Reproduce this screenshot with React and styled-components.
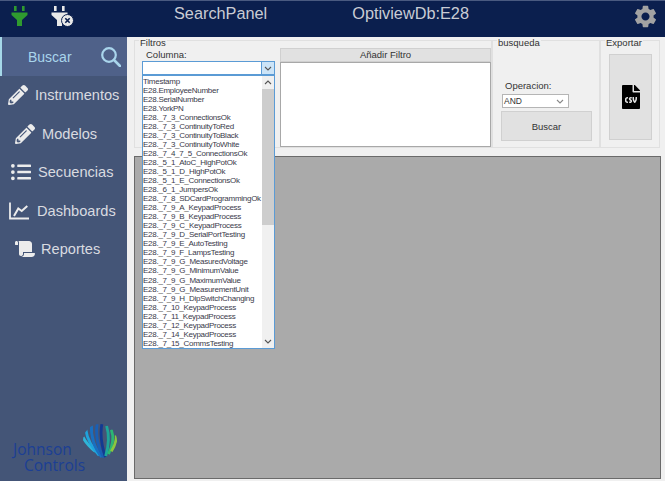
import React from 'react';
import styled, { createGlobalStyle } from 'styled-components';
import { FaPencilAlt, FaListUl, FaScroll, FaFileCsv } from 'react-icons/fa';
import { MdSettings } from 'react-icons/md';

const GlobalStyle = createGlobalStyle`
  html, body {
    margin: 0;
    padding: 0;
    background: #f0f0f0;
    font-family: "Liberation Sans", Arial, sans-serif;
    overflow: hidden;
  }
`;

const Page = styled.div`
  width: 665px;
  height: 481px;
  display: flex;
  flex-direction: column;
`;

const Header = styled.header`
  height: 37px;
  flex: none;
  box-sizing: border-box;
  border-top: 1px solid #4a5a80;
  background: #0b1f4e;
  display: flex;
  align-items: center;
  position: relative;
`;

const PlugSlot = styled.div`
  width: ${(p) => p.$width}px;
  margin-left: ${(p) => p.$left}px;
  display: flex;
  margin-top: -6px;
`;

const HeaderTitle = styled.div`
  color: #c9ccd4;
  font-size: 16.3px;
  margin-left: ${(p) => p.$left}px;
  margin-top: -12px;
  white-space: nowrap;
`;

const GearSlot = styled.div`
  margin-left: auto;
  margin-right: 6px;
  color: #a3a3a3;
  font-size: 27px;
  display: flex;
  margin-top: -6px;
`;

const Body = styled.div`
  flex: 1;
  display: flex;
  min-height: 0;
`;

const Sidebar = styled.nav`
  width: 127px;
  flex: none;
  background: #445577;
  display: flex;
  flex-direction: column;
`;

const ActiveItem = styled.div`
  height: 39px;
  box-sizing: border-box;
  border-left: 2px solid #a6d8e8;
  background: #4f6189;
  color: #a9d5ec;
  font-size: 14px;
  display: flex;
  align-items: center;
  justify-content: space-between;
  padding: 0 6px 0 26px;
`;

const NavItem = styled.div`
  height: 38.5px;
  display: flex;
  align-items: center;
  gap: ${(p) => p.$gap}px;
  padding-left: ${(p) => p.$indent}px;
  color: #d9dbe0;
  font-size: 14.6px;
  white-space: nowrap;

  svg {
    font-size: 20px;
    flex: none;
    color: #ececec;
  }
`;

const Nav = styled.div`
  display: flex;
  flex-direction: column;
`;

const Brand = styled.div`
  margin-top: auto;
  height: 60px;
  position: relative;
  padding: 20px 0 0 13px;
  box-sizing: border-box;
  color: #1c3f94;
  font-family: "Open Sans", "Liberation Sans", sans-serif;
  font-size: 15.5px;
  line-height: 16px;
`;

const BrandLine = styled.div`
  margin-left: ${(p) => p.$indent}px;
`;

const BrandMark = styled.svg`
  position: absolute;
  left: 83px;
  top: 3px;
`;

const Content = styled.main`
  flex: 1;
  display: flex;
  flex-direction: column;
  padding: 0 4px 2px 7px;
  min-width: 0;
`;

const Toolbar = styled.div`
  height: 119px;
  flex: none;
  display: flex;
  color: #333;
`;

const Group = styled.fieldset`
  margin: 0;
  padding: 5px 0 0;
  height: 111px;
  box-sizing: border-box;
  border: 1px solid #e0e0e0;
  width: ${(p) => p.$width}px;
  flex: none;
  position: relative;
  min-width: 0;
`;

const GroupLabel = styled.legend`
  font-size: 9.5px;
  line-height: 11px;
  height: 6px;
  padding: 0 1px;
  margin-left: ${(p) => p.$left}px;
`;

const FilterRow = styled.div`
  display: flex;
  padding: 1px 0 0 7px;
  gap: 5px;
`;

const ColumnField = styled.div`
  width: 133px;
  flex: none;
  position: relative;
`;

const FieldLabel = styled.div`
  font-size: 9.5px;
  line-height: 12px;
  margin-left: ${(p) => p.$left}px;
  height: ${(p) => p.$height}px;
`;

const ComboBox = styled.div`
  height: 14px;
  box-sizing: border-box;
  border: 1px solid #5b9bd5;
  background: #fff;
  display: flex;
  justify-content: flex-end;
`;

const ComboArrow = styled.div`
  width: 12px;
  background: #cce4f7;
  border-left: 1px solid #5b9bd5;
  display: flex;
  align-items: center;
  justify-content: center;
`;

const Dropdown = styled.div`
  position: absolute;
  left: 0;
  top: 26px;
  width: 133px;
  height: 274px;
  box-sizing: border-box;
  border: 1px solid #5b9bd5;
  background: #fff;
  display: flex;
  z-index: 2;
`;

const OptionList = styled.div`
  flex: 1;
  padding: 0.5px 0 0;
  min-width: 0;
  overflow: hidden;
`;

const Option = styled.div`
  height: 9.05px;
  font-size: 8px;
  letter-spacing: -0.27px;
  line-height: 9px;
  color: #3a3a4a;
  white-space: nowrap;
`;

const Scrollbar = styled.div`
  width: 12px;
  flex: none;
  background: #f0f0f0;
  position: relative;
  display: flex;
  flex-direction: column;
  justify-content: space-between;
`;

const ScrollThumb = styled.div`
  position: absolute;
  left: 0;
  right: 0;
  top: 13px;
  height: 136px;
  background: #cdcdcd;
`;

const ScrollArrow = styled.div`
  height: 13px;
  display: flex;
  align-items: center;
  justify-content: center;
`;

const FilterColumn = styled.div`
  flex: 1;
  display: flex;
  flex-direction: column;
  margin-top: -1px;
`;

const AddButton = styled.div`
  height: 14px;
  box-sizing: border-box;
  background: #e1e1e1;
  border: 1px solid #d0d0d0;
  font-size: 9.5px;
  line-height: 12px;
  text-align: center;
  color: #333;
`;

const FilterBox = styled.div`
  height: 85px;
  box-sizing: border-box;
  background: #fff;
  border: 1px solid #a8a8a8;
`;

const SearchBody = styled.div`
  padding: 32px 8px 0 9px;
  display: flex;
  flex-direction: column;
`;

const OperatorSelect = styled.div`
  width: 67px;
  height: 14px;
  box-sizing: border-box;
  background: #fff;
  border: 1px solid #b5b5b5;
  font-size: 8.5px;
  line-height: 12px;
  padding-left: 1px;
  display: flex;
  justify-content: space-between;
  align-items: center;
  padding-right: 4px;
`;

const GrayButton = styled.div`
  box-sizing: border-box;
  background: #e1e1e1;
  border: 1px solid #d0d0d0;
  display: flex;
  align-items: center;
  justify-content: center;
  font-size: 9.5px;
  color: #333;
  width: ${(p) => p.$width}px;
  height: ${(p) => p.$height}px;
  margin: ${(p) => p.$margin};
`;

const ResultPane = styled.section`
  flex: 1;
  box-sizing: border-box;
  background: #aaaaaa;
  border: 1px solid #6a6a6a;
`;

const columns = [
  'Timestamp',
  'E28.EmployeeNumber',
  'E28.SerialNumber',
  'E28.YorkPN',
  'E28._7_3_ConnectionsOk',
  'E28._7_3_ContinuityToRed',
  'E28._7_3_ContinuityToBlack',
  'E28._7_3_ContinuityToWhite',
  'E28._7_4_7_5_ConnectionsOk',
  'E28._5_1_AtoC_HighPotOk',
  'E28._5_1_D_HighPotOk',
  'E28._5_1_E_ConnectionsOk',
  'E28._6_1_JumpersOk',
  'E28._7_8_SDCardProgrammingOk',
  'E28._7_9_A_KeypadProcess',
  'E28._7_9_B_KeypadProcess',
  'E28._7_9_C_KeypadProcess',
  'E28._7_9_D_SerialPortTesting',
  'E28._7_9_E_AutoTesting',
  'E28._7_9_F_LampsTesting',
  'E28._7_9_G_MeasuredVoltage',
  'E28._7_9_G_MinimumValue',
  'E28._7_9_G_MaximumValue',
  'E28._7_9_G_MeasurementUnit',
  'E28._7_9_H_DipSwitchChanging',
  'E28._7_10_KeypadProcess',
  'E28._7_11_KeypadProcess',
  'E28._7_12_KeypadProcess',
  'E28._7_14_KeypadProcess',
  'E28._7_15_CommsTesting',
];

function ChartIcon() {
  return (
    <svg width="20" height="20" viewBox="0 0 20 20" fill="none" stroke="currentColor">
      <path d="M1 1.5 V17.5 H20" strokeWidth="1.8" />
      <path d="M5 15 L9.3 7.5 L12.7 10 L18.3 5" strokeWidth="2" />
    </svg>
  );
}

const navItems = [
  { label: 'Instrumentos', Icon: FaPencilAlt, indent: 8, gap: 7 },
  { label: 'Modelos', Icon: FaPencilAlt, indent: 15, gap: 7 },
  { label: 'Secuencias', Icon: FaListUl, indent: 11, gap: 7 },
  { label: 'Dashboards', Icon: ChartIcon, indent: 9, gap: 8 },
  { label: 'Reportes', Icon: FaScroll, indent: 15, gap: 6 },
];

function Chevron({ up, color = '#555' }) {
  return (
    <svg width="8" height="5" viewBox="0 0 8 5">
      <path d={up ? 'M1 4 L4 1 L7 4' : 'M1 1 L4 4 L7 1'} fill="none" stroke={color} strokeWidth="1.1" />
    </svg>
  );
}

function SearchGlass() {
  return (
    <svg width="20" height="20" viewBox="0 0 20 20" fill="none" stroke="#a9d5ec" strokeWidth="2.2">
      <circle cx="8" cy="8" r="6.8" />
      <path d="M13 13 L19 19" strokeLinecap="round" strokeWidth="2.6" />
    </svg>
  );
}

function Plug({ color }) {
  return (
    <svg width="17" height="21" viewBox="0 0 17 21">
      <rect x="3" y="0" width="2.6" height="5" fill={color} />
      <rect x="11" y="0" width="2.6" height="5" fill={color} />
      <path d="M0.5 6.5 H16.5 V9 L11 14 V20 H6 V14 L0.5 9 Z" fill={color} />
    </svg>
  );
}

function PlugOff() {
  return (
    <svg width="23" height="21" viewBox="0 0 23 21">
      <rect x="3" y="0" width="2.6" height="5" fill="#e8e8e8" />
      <rect x="11" y="0" width="2.6" height="5" fill="#e8e8e8" />
      <path d="M0.5 6.5 H16.5 V9 L11 14 V20 H6 V14 L0.5 9 Z" fill="#e8e8e8" />
      <circle cx="16.5" cy="14.5" r="6" fill="#e8e8e8" stroke="#0b1f4e" strokeWidth="1" />
      <path d="M14.3 12.3 L18.7 16.7 M18.7 12.3 L14.3 16.7" stroke="#0b1f4e" strokeWidth="1.6" />
    </svg>
  );
}

function Logo() {
  return (
    <BrandMark width="34" height="34" viewBox="0 0 36 36">
      <defs>
        <clipPath id="globe">
          <circle cx="18" cy="18" r="18" />
        </clipPath>
      </defs>
      <g clipPath="url(#globe)" fill="none" strokeWidth="3">
        <path d="M0 14 C3 20 8 25 13 29" stroke="#2fb5d8" />
        <path d="M3 6 C4 15 10 26 17 33" stroke="#1fa3dc" />
        <path d="M9 1 C8 12 12 26 20 35" stroke="#1a6fc0" />
        <path d="M15 0 C13 12 16 26 22 36" stroke="#1a5fb4" />
        <path d="M20 0 C18 10 20 24 24 36" stroke="#123a92" />
        <path d="M25 2 C28 12 27 24 24 34" stroke="#1ea59a" />
        <path d="M30 6 C33 14 31 24 27 32" stroke="#2bb673" />
        <path d="M35 12 C36 18 33 24 30 29" stroke="#8cc63f" />
      </g>
    </BrandMark>
  );
}

export default function App() {
  return (
    <Page>
      <GlobalStyle />
      <Header>
        <PlugSlot $left={11} $width={17}>
          <Plug color="#2f9a2f" />
        </PlugSlot>
        <PlugSlot $left={23} $width={23}>
          <PlugOff />
        </PlugSlot>
        <HeaderTitle $left={100}>SearchPanel</HeaderTitle>
        <HeaderTitle $left={85}>OptiviewDb:E28</HeaderTitle>
        <GearSlot>
          <MdSettings />
        </GearSlot>
      </Header>
      <Body>
        <Sidebar>
          <ActiveItem>
            Buscar
            <SearchGlass />
          </ActiveItem>
          <Nav>
            {navItems.map(({ label, Icon, indent, gap }) => (
              <NavItem key={label} $indent={indent} $gap={gap}>
                <Icon />
                {label}
              </NavItem>
            ))}
          </Nav>
          <Brand>
            <Logo />
            <BrandLine $indent={0}>Johnson</BrandLine>
            <BrandLine $indent={11}>Controls</BrandLine>
          </Brand>
        </Sidebar>
        <Content>
          <Toolbar>
            <Group $width={358}>
              <GroupLabel $left={4}>Filtros</GroupLabel>
              <FilterRow>
                <ColumnField>
                  <FieldLabel $left={4} $height={12}>Columna:</FieldLabel>
                  <ComboBox>
                    <ComboArrow>
                      <Chevron />
                    </ComboArrow>
                  </ComboBox>
                  <Dropdown>
                    <OptionList>
                      {columns.map((name) => (
                        <Option key={name}>{name}</Option>
                      ))}
                    </OptionList>
                    <Scrollbar>
                      <ScrollThumb />
                      <ScrollArrow>
                        <Chevron up />
                      </ScrollArrow>
                      <ScrollArrow>
                        <Chevron />
                      </ScrollArrow>
                    </Scrollbar>
                  </Dropdown>
                </ColumnField>
                <FilterColumn>
                  <AddButton>Añadir Filtro</AddButton>
                  <FilterBox />
                </FilterColumn>
              </FilterRow>
            </Group>
            <Group $width={108}>
              <GroupLabel $left={4}>busqueda</GroupLabel>
              <SearchBody>
                <FieldLabel $left={3} $height={14}>Operacion:</FieldLabel>
                <OperatorSelect>
                  AND
                  <Chevron color="#888" />
                </OperatorSelect>
                <GrayButton $width={91} $height={30} $margin="3px 0 0 -1px">Buscar</GrayButton>
              </SearchBody>
            </Group>
            <Group $width={60}>
              <GroupLabel $left={4}>Exportar</GroupLabel>
              <GrayButton $width={43} $height={86} $margin="6px 0 0 8px">
                <FaFileCsv size={24} color="#000" />
              </GrayButton>
            </Group>
          </Toolbar>
          <ResultPane />
        </Content>
      </Body>
    </Page>
  );
}
